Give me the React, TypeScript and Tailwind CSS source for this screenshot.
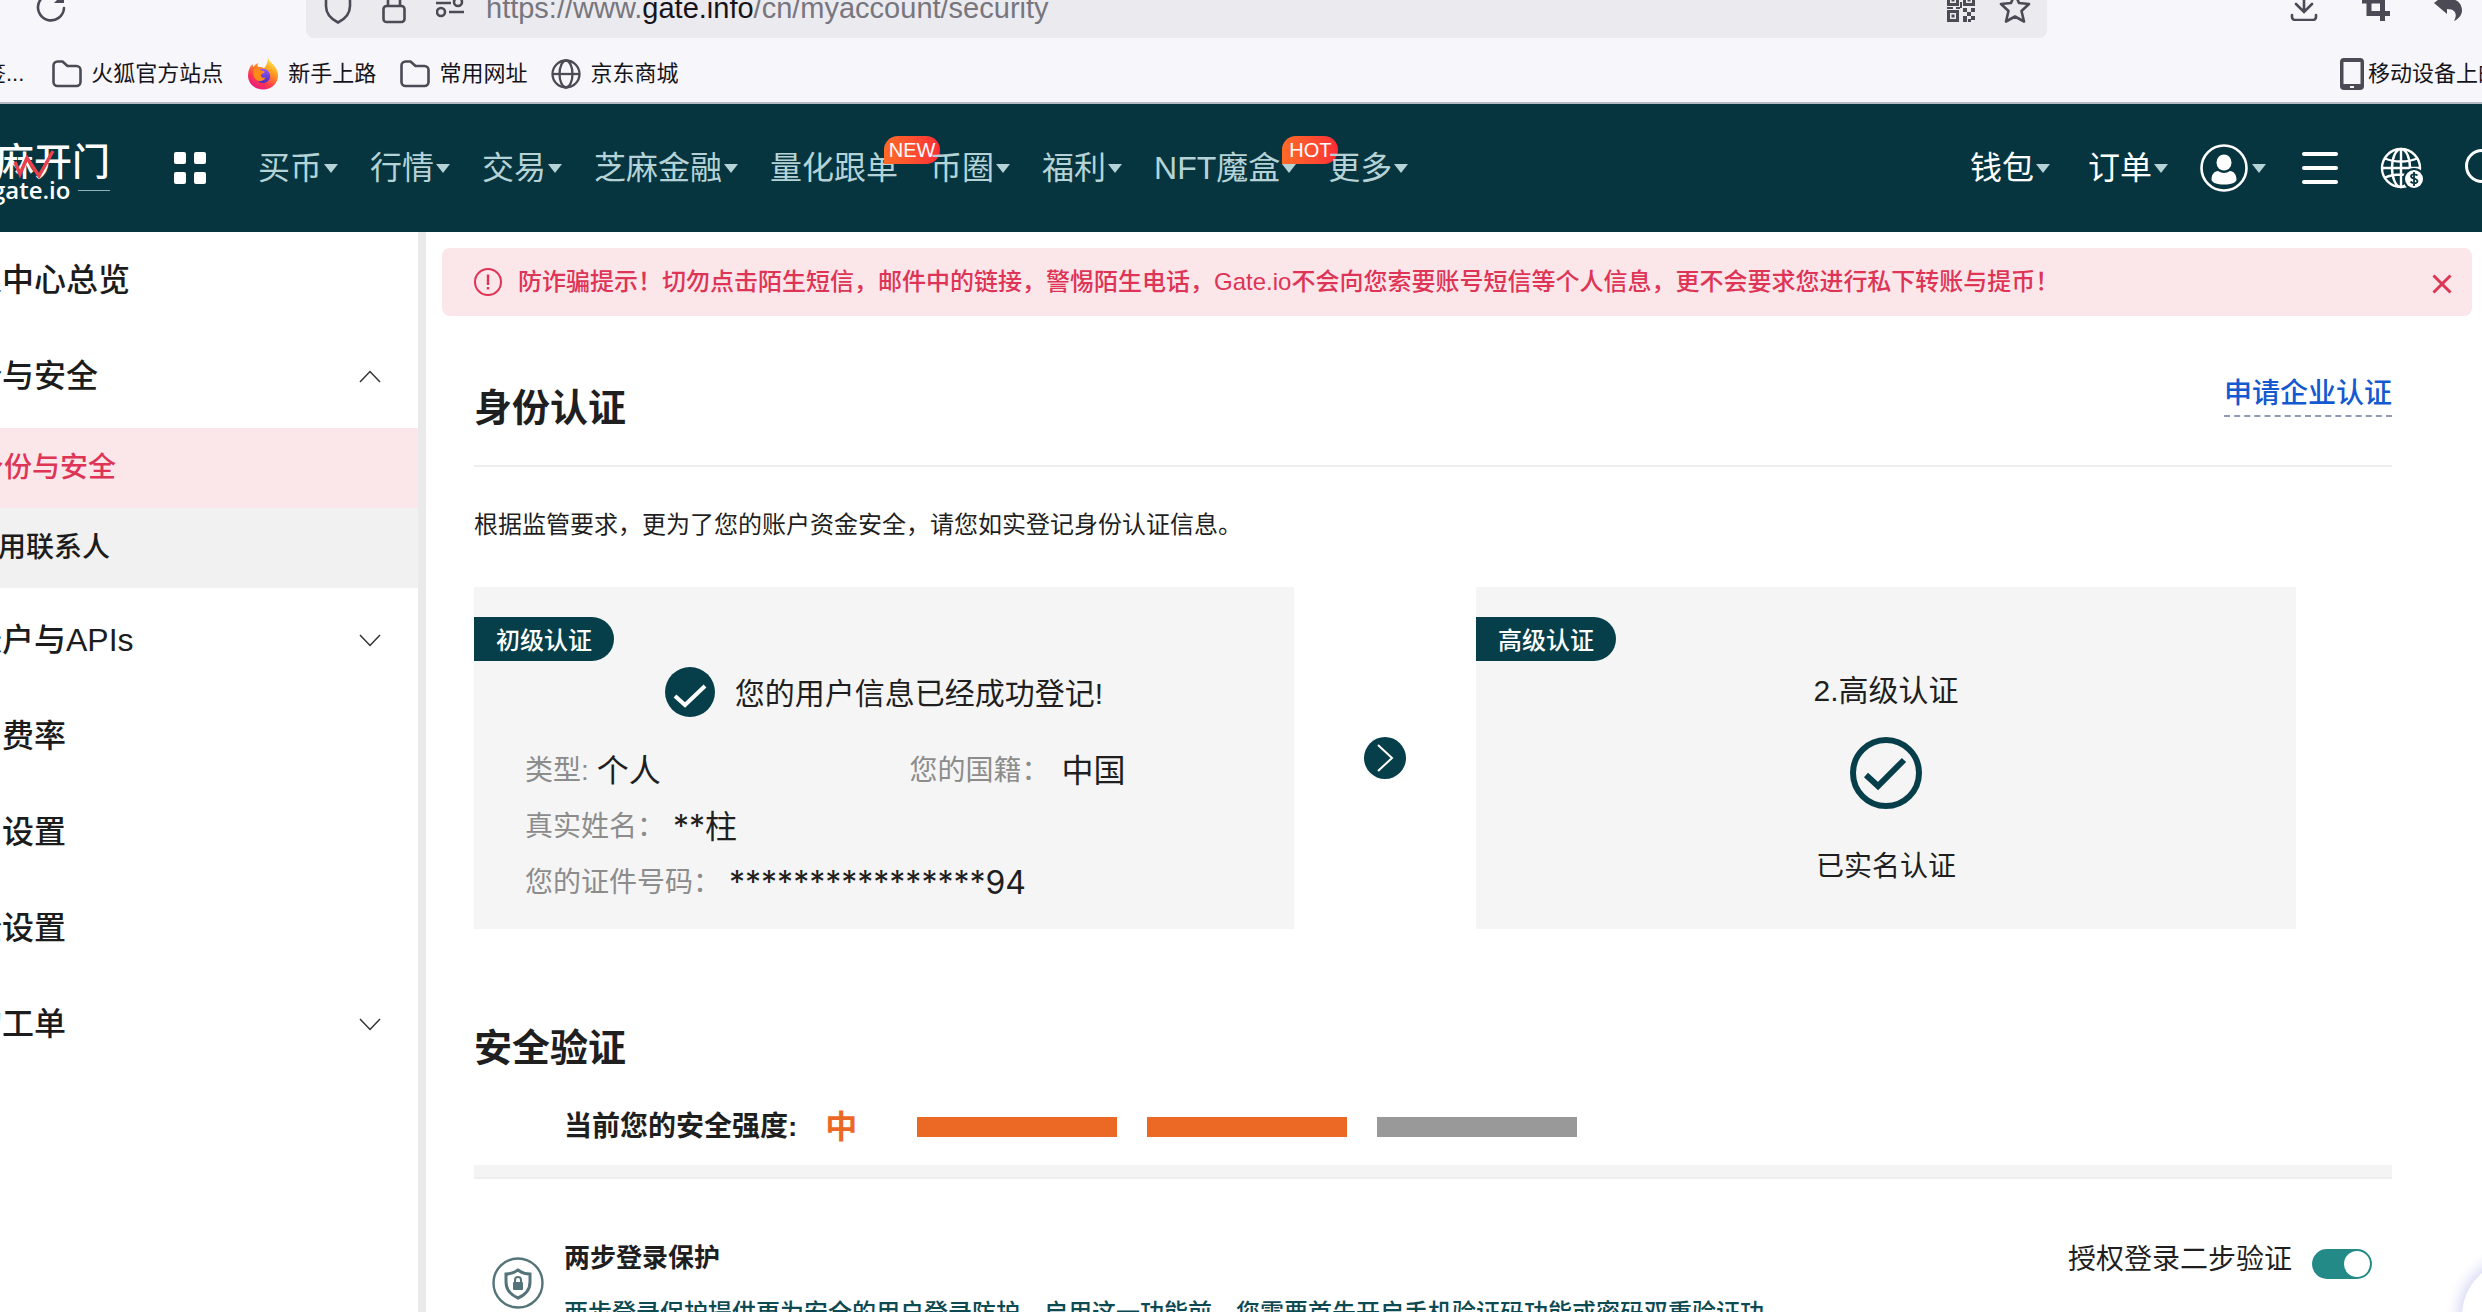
import React from "react";

const FONT = "font-['Liberation_Sans','Noto_Sans_CJK_SC',sans-serif]";

function Caret({ className = "" }: { className?: string }) {
  return (
    <svg viewBox="0 0 14 9" className={"h-[9px] w-[14px] shrink-0 fill-[#b5d3d6] " + className} aria-hidden="true">
      <path d="M0 0h14L7 9z" />
    </svg>
  );
}

function FolderIcon() {
  return (
    <svg viewBox="0 0 30 28" className="h-7 w-[30px] shrink-0" fill="none" stroke="#4b4a55" strokeWidth="2.6" strokeLinejoin="round">
      <path d="M1.500 5.500a4 4 0 0 1 4-4h5l5 4.500h9a4 4 0 0 1 4 4v12a4 4 0 0 1-4 4h-19a4 4 0 0 1-4-4z" />
    </svg>
  );
}

function GlobeIcon() {
  return (
    <svg viewBox="0 0 30 30" className="h-[30px] w-[30px] shrink-0" fill="none" stroke="#4b4a55" strokeWidth="2.3">
      <circle cx="15" cy="15" r="13.5" />
      <ellipse cx="15" cy="15" rx="6.5" ry="13.5" />
      <path d="M1.500 15h27" />
    </svg>
  );
}

function FirefoxIcon() {
  return (
    <svg viewBox="0 0 32 32" className="h-8 w-8 shrink-0">
      <defs>
        <linearGradient id="fx-a" x1="0.8" y1="0" x2="0.2" y2="1">
          <stop offset="0" stopColor="#fff44f" />
          <stop offset="0.35" stopColor="#ff9a1f" />
          <stop offset="0.7" stopColor="#ff3750" />
          <stop offset="1" stopColor="#e31587" />
        </linearGradient>
        <linearGradient id="fx-b" x1="0.5" y1="0" x2="0.5" y2="1">
          <stop offset="0" stopColor="#9059ff" />
          <stop offset="1" stopColor="#4b2bc0" />
        </linearGradient>
      </defs>
      <path fill="url(#fx-a)" d="M21 0c1 3 3.500 4.500 6 7.500 2.500 3 4 6 4 10C31 25.500 24.500 31.500 16 31.500S1 25.500 1 17.500C1 12 3 8.500 5.500 6c0 1.500.5 2.500 1 3 1-2 3-3.500 5-4-1 1.500-1 3-.5 4 3-.5 5 .5 6 1.500C19.500 7.500 20.500 4 21 0z" />
      <circle cx="16" cy="18" r="7.200" fill="url(#fx-b)" />
      <path fill="#ff8a16" d="M6.500 11c3-1 6 0 7.500 1.500 2 .3 3.500.5 3.500 1.500 0 1.500-3 1.500-3.500 3-.5 2 2 3.500 4.500 2.500-1 3-4.500 4.500-8 3-3.500-1.500-5-6-4-11.500z" />
    </svg>
  );
}

function Bookmark({ icon, label }: { icon?: React.ReactNode; label: string }) {
  return (
    <a href="#" className="flex items-center gap-[9px] whitespace-nowrap text-[22px] leading-8 text-[#15141a]">
      {icon}
      {label}
    </a>
  );
}

function BrowserChrome() {
  return (
    <div className="shrink-0 border-b-2 border-[#b3bcc2] bg-[#f7f6fb] text-[#4b4a55]">
      <div className="flex h-[38px] items-start">
        <div className="flex h-[14px] w-[306px] shrink-0 items-center pl-9">
          <button aria-label="刷新">
            <svg viewBox="0 0 30 30" className="h-[30px] w-[30px]" fill="none" stroke="#4b4a55" strokeWidth="2.600" strokeLinecap="round">
              <path d="M28 16a13 13 0 1 1-4.500-10.500" />
              <path d="M28 1v10H18z" fill="#4b4a55" stroke="none" />
            </svg>
          </button>
        </div>
        <div className="flex h-[38px] grow items-start rounded-b-lg bg-[#ebeaef] px-[18px]">
          <div className="flex h-4 grow items-center">
            <svg viewBox="0 0 28 32" className="h-8 w-7" fill="none" stroke="#4b4a55" strokeWidth="2.600">
              <path d="M2 5l12-3.500L26 5v9c0 8-5 13-12 16.500C7 27 2 22 2 14z" />
            </svg>
            <svg viewBox="0 0 24 32" className="ml-[30px] h-8 w-6" fill="none" stroke="#4b4a55" strokeWidth="2.600">
              <rect x="1.500" y="14" width="21" height="16" rx="3" />
              <path d="M6 14V8a6 6 0 0 1 12 0v6" />
            </svg>
            <svg viewBox="0 0 28 24" className="ml-[30px] h-6 w-7" fill="none" stroke="#4b4a55" strokeWidth="2.600">
              <circle cx="22" cy="6" r="4" />
              <path d="M0 7h15M13 16h15" />
              <circle cx="5" cy="16" r="4" />
            </svg>
            <div role="textbox" aria-label="地址" tabIndex={0} className="ml-[22px] whitespace-nowrap text-[29px] leading-8 text-[#77767e]">
              https://www.<span className="text-[#15141a]">gate.info</span>/cn/myaccount/security
            </div>
            <button aria-label="二维码" className="ml-auto">
              <svg viewBox="0 0 28 28" className="h-7 w-7" fill="#4b4a55">
                <path fillRule="evenodd" d="M0 0h12v12H0zM3 3v6h6V3zM16 0h12v12H16zM19 3v6h6V3zM0 16h12v12H0zM3 19v6h6v-6z" />
                <path d="M4.500 4.500h3v3h-3zM20.500 4.500h3v3h-3zM4.500 20.500h3v3h-3zM13 0h2v6h-2zM13 8h2v6h-2zM0 13h6v2H0zM9 13h4v2H9zM16 14h4v4h-4zM24 14h4v4h-4zM20 18h4v4h-4zM16 22h4v6h-4zM24 22h4v4h-4zM21 25h3v3h-3z" />
              </svg>
            </button>
            <button aria-label="收藏" className="-mr-0.5 ml-6">
              <svg viewBox="0 0 32 32" className="h-8 w-8" fill="none" stroke="#4b4a55" strokeWidth="2.600" strokeLinejoin="round">
                <path d="M16 2l4 9 10 1-7.500 7L25 29.500l-9-5-9 5L9.500 19 2 12l10-1z" />
              </svg>
            </button>
          </div>
        </div>
        <div className="flex h-[14px] w-[435px] shrink-0 items-center justify-end gap-11 pr-5">
          <button aria-label="下载">
            <svg viewBox="0 0 28 28" className="h-7 w-7" fill="none" stroke="#4b4a55" strokeWidth="2.600" strokeLinecap="round">
              <path d="M14 0v18M6 11l8 8 8-8M2 22v2a3 3 0 0 0 3 3h18a3 3 0 0 0 3-3v-2" />
            </svg>
          </button>
          <button aria-label="截图">
            <svg viewBox="0 0 28 28" className="h-7 w-7" fill="none" stroke="#4b4a55" strokeWidth="5">
              <path d="M7 0v20.500h21M0 8h20.500v20" />
            </svg>
          </button>
          <button aria-label="撤销">
            <svg viewBox="0 0 28 28" className="h-7 w-7" fill="#4b4a55">
              <path d="M0 10L13 0v5.500c10 0 15 5 15 12 0 4-3 8.500-8 10.500 3-5 3-12-7-12V21z" />
            </svg>
          </button>
        </div>
      </div>
      <div className="flex h-16 items-center overflow-hidden pt-2">
        <nav aria-label="书签" className="flex grow items-center gap-6">
          <div className="-ml-4 mr-1">
            <Bookmark label="签..." />
          </div>
          <Bookmark icon={<FolderIcon />} label="火狐官方站点" />
          <Bookmark icon={<FirefoxIcon />} label="新手上路" />
          <Bookmark icon={<FolderIcon />} label="常用网址" />
          <Bookmark icon={<GlobeIcon />} label="京东商城" />
        </nav>
        <div className="w-[142px] shrink-0">
          <a href="#" className="flex items-center gap-1 whitespace-nowrap text-[22px] leading-8 text-[#15141a]">
            <svg viewBox="0 0 24 32" className="h-8 w-6 shrink-0">
              <rect width="24" height="32" rx="4" fill="#4b4a55" />
              <path d="M3.500 4h17v22h-17z" fill="#f7f6fb" />
              <path d="M10 28h4v2h-4z" fill="#f7f6fb" />
            </svg>
            移动设备上的书签
          </a>
        </div>
      </div>
    </div>
  );
}

function Badge({ children }: { children: React.ReactNode }) {
  return (
    <span className="absolute -right-[42px] -top-[10px] flex h-7 w-14 items-center justify-center rounded-[14px] rounded-bl-none bg-gradient-to-r from-[#ff6a26] to-[#ff2a36] text-xl leading-7 text-white">
      {children}
    </span>
  );
}

type NavItem = { label: string; caret?: boolean; badge?: string };

const NAV: NavItem[] = [
  { label: "买币", caret: true },
  { label: "行情", caret: true },
  { label: "交易", caret: true },
  { label: "芝麻金融", caret: true },
  { label: "量化跟单", badge: "NEW" },
  { label: "币圈", caret: true },
  { label: "福利", caret: true },
  { label: "NFT魔盒", caret: true, badge: "HOT" },
  { label: "更多", caret: true },
];

function Logo() {
  return (
    <a href="#" aria-label="gate.io" className="relative -ml-1 flex w-[114px] shrink-0 flex-col pt-1.5 text-white">
      <span className="whitespace-nowrap text-[38px] font-medium leading-[44px]">麻开门</span>
      <span className="-mt-1.5 flex items-center gap-2 whitespace-nowrap">
        <span className="-ml-1 font-['Open_Sans',sans-serif] text-2xl font-semibold leading-6">gate.io</span>
        <span className="h-px grow bg-[#8fb2b6]" />
      </span>
      <svg viewBox="0 0 44 32" className="absolute left-4 top-4 h-8 w-11" fill="none" stroke="#e8404c" strokeWidth="3.500">
        <path d="M3 12l5 12 7-16 12 18L41 1" />
      </svg>
    </a>
  );
}

function SiteHeader() {
  return (
    <header className="flex h-32 shrink-0 items-center bg-[#063540] text-[32px] leading-[44px] text-white">
      <Logo />
      <button aria-label="应用" className="ml-16 mr-[52px] grid shrink-0 grid-cols-2 gap-2">
        <i className="h-3 w-3 rounded-[2px] bg-white" />
        <i className="h-3 w-3 rounded-[2px] bg-white" />
        <i className="h-3 w-3 rounded-[2px] bg-white" />
        <i className="h-3 w-3 rounded-[2px] bg-white" />
      </button>
      <nav className="flex grow items-center gap-8 text-[#b5d3d6]">
        {NAV.map((n) => (
          <button key={n.label} className="relative flex items-center gap-[2px] whitespace-nowrap">
            {n.label}
            {n.caret && <Caret />}
            {n.badge && <Badge>{n.badge}</Badge>}
          </button>
        ))}
      </nav>
      <div className="flex w-[512px] shrink-0 items-center">
        <button className="flex shrink-0 items-center gap-[2px] whitespace-nowrap">
          钱包
          <Caret />
        </button>
        <button className="ml-[38px] flex shrink-0 items-center gap-[2px] whitespace-nowrap">
          订单
          <Caret />
        </button>
        <button aria-label="账户" className="ml-8 flex shrink-0 items-center gap-1">
          <svg viewBox="0 0 48 48" className="h-12 w-12">
            <circle cx="24" cy="24" r="22.500" fill="none" stroke="#fff" strokeWidth="2.600" />
            <ellipse cx="24" cy="18.500" rx="7.500" ry="8" fill="#fff" />
            <path fill="#fff" d="M11.500 35.500c0-5 3-8.500 6.500-8.500 2 1.200 4 2 6 2s4-.8 6-2c3.500 0 6.500 3.500 6.500 8.500 0 3-5.500 5-12.500 5s-12.500-2-12.500-5z" />
          </svg>
          <Caret />
        </button>
        <button aria-label="菜单" className="ml-9 flex w-9 shrink-0 flex-col gap-[10px]">
          <i className="h-1 w-full rounded-sm bg-white" />
          <i className="h-1 w-full rounded-sm bg-white" />
          <i className="h-1 w-full rounded-sm bg-white" />
        </button>
        <button aria-label="语言与货币" className="ml-[42px] shrink-0">
          <svg viewBox="0 0 44 44" className="h-11 w-11" fill="none" stroke="#fff" strokeWidth="2.400">
            <circle cx="21" cy="22" r="19" />
            <ellipse cx="21" cy="22" rx="9" ry="19" />
            <path d="M21 3v38M5 12.500c9 4 23 4 32 0M2 22h38M5 31.500c9-4 23-4 32 0" />
            <circle cx="34" cy="33" r="11" fill="#063540" stroke="none" />
            <circle cx="34" cy="33" r="9" fill="#fff" stroke="none" />
            <path stroke="#063540" strokeWidth="1.800" d="M37.500 29.500c-1-1.500-6.500-2-6.500.8 0 3 6.500 1.800 6.500 5 0 2.700-6 2.200-7 .2M34 26v14" />
          </svg>
        </button>
        <button aria-label="搜索" className="ml-10 shrink-0">
          <svg viewBox="0 0 40 40" className="h-10 w-10" fill="none" stroke="#fff" strokeWidth="3">
            <circle cx="18" cy="18" r="15.500" />
            <path d="M29 29l9 9" />
          </svg>
        </button>
      </div>
    </header>
  );
}

function Chevron({ up = false }: { up?: boolean }) {
  return (
    <svg viewBox="0 0 22 13" className="h-[13px] w-[22px]" fill="none" stroke="#333" strokeWidth="1.500">
      <path d={up ? "M1 12L11 1.500 21 12" : "M1 1l10 10.500L21 1"} />
    </svg>
  );
}

function SideItem({ label, chevron }: { label: string; chevron?: "up" | "down" }) {
  return (
    <a href="#" className="flex h-24 items-center justify-between overflow-hidden pr-[37px] text-[32px] leading-[44px] text-[#1c1c1c]">
      <span className="-ml-[30px] whitespace-nowrap">{label}</span>
      {chevron && <Chevron up={chevron === "up"} />}
    </a>
  );
}

function Sidebar() {
  return (
    <aside className="w-[426px] shrink-0 overflow-hidden border-r-8 border-[#eaeaea] bg-white font-medium">
      <SideItem label="人中心总览" />
      <SideItem label="份与安全" chevron="up" />
      <div className="py-1 text-[28px] leading-10">
        <a href="#" className="flex h-20 items-center overflow-hidden bg-[#fbe6ea] text-[#de3455]">
          <span className="-ml-6">身份与安全</span>
        </a>
        <a href="#" className="flex h-20 items-center overflow-hidden bg-[#f1f1f1] text-[#1c1c1c]">
          <span className="-ml-[30px]">常用联系人</span>
        </a>
      </div>
      <SideItem label="账户与APIs" chevron="down" />
      <SideItem label="易费率" />
      <SideItem label="知设置" />
      <SideItem label="全设置" />
      <SideItem label="的工单" chevron="down" />
    </aside>
  );
}

function Tag({ children }: { children: React.ReactNode }) {
  return (
    <div className="flex h-11 w-[140px] items-center rounded-r-[22px] bg-[#063f4a] pl-[22px] pt-1 text-2xl font-medium leading-8 text-white">
      {children}
    </div>
  );
}

function Field({ label, value, gap }: { label: string; value: string; gap: string }) {
  return (
    <div className={"flex w-1/2 items-center whitespace-nowrap " + gap}>
      <dt className="text-[28px] text-[#8c8c8c]">{label}</dt>
      <dd className="text-[32px] text-[#1f1f1f] font-['Inter','Noto_Sans_CJK_SC',sans-serif]">{value}</dd>
    </div>
  );
}

function IdentitySection() {
  return (
    <section>
      <div className="flex items-start justify-between border-b-2 border-[#eeeeee] pb-[34px]">
        <h2 className="mt-3 text-[38px] font-bold leading-[46px]">身份认证</h2>
        <a href="#" className="border-b-2 border-dashed border-[#8f9bb5] text-[28px] font-medium leading-[42px] text-[#1459cf]">
          申请企业认证
        </a>
      </div>
      <p className="mt-10 text-2xl leading-9">根据监管要求，更为了您的账户资金安全，请您如实登记身份认证信息。</p>
      <div className="mt-11 flex items-stretch pr-24">
        <div className="flex-1 bg-[#f5f5f5] pb-[18px] pt-[30px]">
          <Tag>初级认证</Tag>
          <div className="mt-[6px] flex items-center justify-center gap-5">
            <svg viewBox="0 0 50 50" className="h-[50px] w-[50px]">
              <circle cx="25" cy="25" r="25" fill="#063f4a" />
              <path d="M10 29l10 9 20-19" fill="none" stroke="#fff" strokeWidth="4" />
            </svg>
            <p className="pt-1 text-[30px] leading-[46px]">您的用户信息已经成功登记!</p>
          </div>
          <dl className="mt-[26px] pl-[51px] leading-[56px]">
            <div className="flex">
              <Field label="类型:" value="个人" gap="gap-2" />
              <Field label="您的国籍：" value="中国" gap="gap-3" />
            </div>
            <Field label="真实姓名：" value="**柱" gap="gap-2" />
            <Field label="您的证件号码：" value="****************94" gap="gap-2" />
          </dl>
        </div>
        <div className="flex w-[182px] items-center justify-center">
          <svg viewBox="0 0 42 42" className="h-[42px] w-[42px]">
            <circle cx="21" cy="21" r="21" fill="#063f4a" />
            <path d="M14 8l14 13-14 13" fill="none" stroke="#fff" strokeWidth="2" />
          </svg>
        </div>
        <div className="flex-1 bg-[#f5f5f5] pt-[30px]">
          <Tag>高级认证</Tag>
          <div className="mt-2 flex flex-col items-center">
            <p className="text-[30px] leading-[44px]">2.高级认证</p>
            <svg viewBox="0 0 72 72" className="mt-6 h-[72px] w-[72px]" fill="none" stroke="#063f4a">
              <circle cx="36" cy="36" r="33" strokeWidth="6" />
              <path d="M16 38l12 11 26-26" strokeWidth="6" />
            </svg>
            <p className="mt-[38px] text-[28px] leading-10">已实名认证</p>
          </div>
        </div>
      </div>
    </section>
  );
}

function SecuritySection() {
  return (
    <section className="mt-24">
      <h2 className="text-[38px] font-bold leading-[46px]">安全验证</h2>
      <div className="mt-9 flex h-10 items-center pl-[90px]">
        <span className="text-[28px] font-bold">当前您的安全强度:</span>
        <span className="ml-7 text-[32px] font-bold text-[#ec6925]">中</span>
        <div className="ml-[60px] flex gap-[30px]">
          <i className="h-5 w-[200px] bg-[#ec6925]" />
          <i className="h-5 w-[200px] bg-[#ec6925]" />
          <i className="h-5 w-[200px] bg-[#999999]" />
        </div>
      </div>
      <div className="mt-[18px] h-[14px] border-b-2 border-[#eeeeee] bg-[#f4f4f4]" />
      <div className="flex items-start pt-[60px]">
        <svg viewBox="0 0 52 52" className="ml-[18px] mt-[18px] h-[52px] w-[52px] shrink-0" fill="none" stroke="#54747a" strokeWidth="2.400">
          <circle cx="26" cy="26" r="24.500" />
          <path strokeWidth="3" d="M26 13c4 3 8 4 12 4v8c0 8-5 13-12 16-7-3-12-8-12-16v-8c4 0 8-1 12-4z" />
          <path strokeWidth="2" d="M23 26v-3a3 3 0 0 1 6 0v3" />
          <rect x="21" y="25" width="10" height="8" rx="1" fill="#54747a" stroke="none" />
        </svg>
        <div className="ml-5 w-[1210px]">
          <h3 className="text-[26px] font-bold leading-[38px]">两步登录保护</h3>
          <p className="mt-[18px] text-2xl font-medium leading-9 text-[#0e4a52]">
            两步登录保护提供更为安全的用户登录防护。启用这一功能前，您需要首先开启手机验证码功能或密码双重验证功能。
          </p>
        </div>
        <label className="ml-auto mr-5 mt-[2px] flex items-center gap-5 whitespace-nowrap text-[28px] leading-9">
          授权登录二步验证
          <input type="checkbox" role="switch" defaultChecked className="peer sr-only" />
          <span className="mt-2 flex h-[30px] w-[60px] items-center justify-end rounded-full bg-[#248a87] p-[2px]">
            <span className="h-[26px] w-[26px] rounded-full bg-white" />
          </span>
        </label>
      </div>
    </section>
  );
}

export default function App() {
  return (
    <div className={"relative flex h-screen flex-col overflow-hidden bg-white text-[#1f1f1f] " + FONT}>
      <BrowserChrome />
      <SiteHeader />
      <div className="flex min-h-0 grow">
        <Sidebar />
        <main className="min-w-0 grow overflow-hidden pl-4 pr-[10px] pt-4">
          <div role="alert" className="flex h-[68px] items-center rounded-lg bg-[#fbe6ea] pl-8 pr-5 text-[#de3455]">
            <svg viewBox="0 0 28 28" className="h-7 w-7 shrink-0" fill="none" stroke="#de3455" strokeWidth="2">
              <circle cx="14" cy="14" r="13" />
              <path d="M14 6.500v10.500M14 19v2.500" strokeWidth="2.400" />
            </svg>
            <p className="ml-4 grow text-2xl font-medium leading-9">
              防诈骗提示！切勿点击陌生短信，邮件中的链接，警惕陌生电话，Gate.io不会向您索要账号短信等个人信息，更不会要求您进行私下转账与提币！
            </p>
            <button aria-label="关闭" className="pt-1">
              <svg viewBox="0 0 20 20" className="h-5 w-5" fill="none" stroke="#de3455" strokeWidth="3">
                <path d="M1.500 1.500l17 17M18.500 1.500l-17 17" />
              </svg>
            </button>
          </div>
          <div className="pl-8 pr-20 pt-[57px]">
            <IdentitySection />
            <SecuritySection />
          </div>
        </main>
      </div>
      <button
        aria-label="客服"
        className="absolute -bottom-[60px] -right-[92px] h-[112px] w-[112px] rounded-full bg-white shadow-[0_0_14px_4px_#d6d8f4]"
      />
    </div>
  );
}
